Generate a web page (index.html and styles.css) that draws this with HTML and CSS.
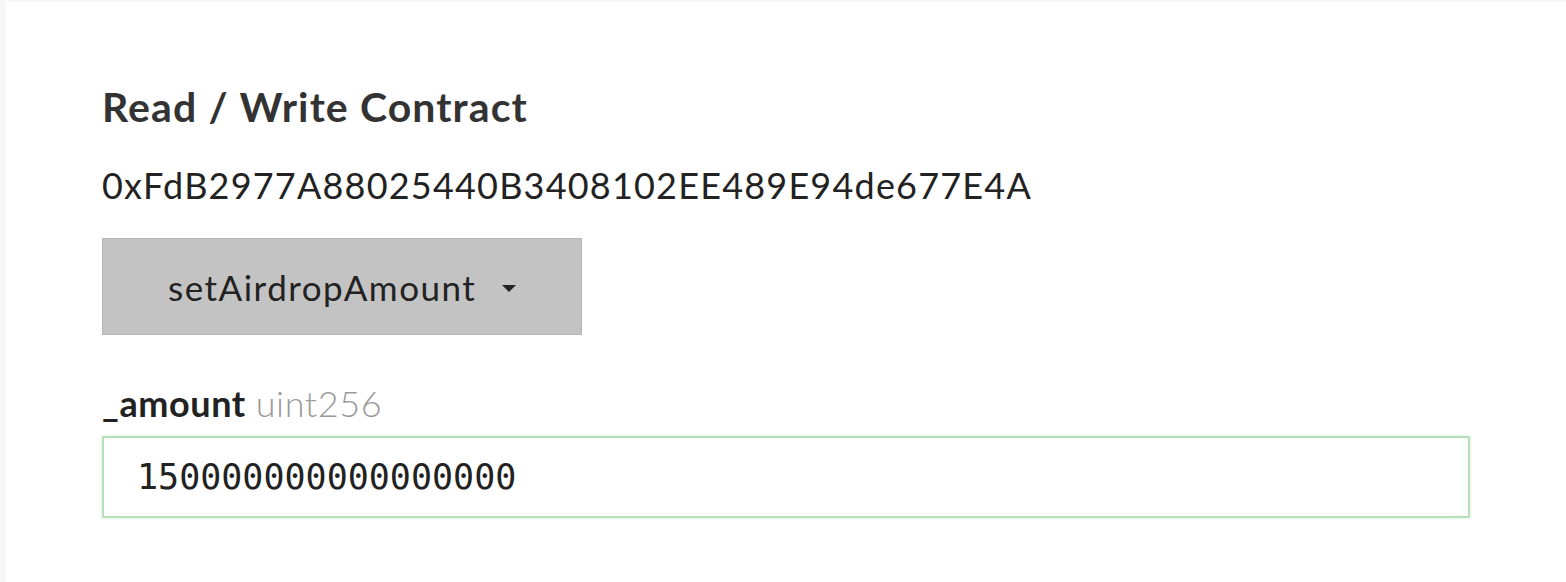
FILE: index.html
```html
<!DOCTYPE html>
<html>
<head>
<meta charset="utf-8">
<link rel="stylesheet" href="styles.css">
</head>
<body>
<div class="page">
  <main class="card">
    <h1 class="title">Read / Write Contract</h1>
    <div class="address">0xFdB2977A88025440B3408102EE489E94de677E4A</div>
    <button class="select">
      <span>setAirdropAmount</span>
      <svg class="caret" width="14" height="8" viewBox="0 0 14 8"><path d="M0 0h14L7 7z" fill="#222"/></svg>
    </button>
    <label class="label"><b>_amount</b> <span class="type">uint256</span></label>
    <div class="input">150000000000000000</div>
  </main>
</div>
</body>
</html>
```

FILE: styles.css
```css
html, body { margin: 0; padding: 0; }
body { background: #f6f6f6; font-family: Lato, "Open Sans", sans-serif; color: #333; }
.page { padding: 2px 0 0 6px; height: 580px; }
.card { background: #fff; height: 100%; padding: 81px 0 0 96px; box-sizing: border-box; display: flex; flex-direction: column; align-items: flex-start; }
.title { margin: 0; font-size: 41px; font-weight: 700; line-height: 48px; letter-spacing: 1.1px; color: #333; }
.address { margin-top: 34px; font-size: 36px; line-height: 40px; letter-spacing: 1.2px; color: #222; }
.select { margin-top: 33px; width: 480px; height: 97px; background: #c3c3c3; border: 1px solid #b5b5b5; font-family: Lato, sans-serif; font-size: 35px; letter-spacing: 1.5px; color: #222; display: flex; align-items: center; padding: 0 0 0 65px; gap: 26px; }
.caret { margin-top: 4px; }
.label { margin-top: 48px; font-size: 36px; line-height: 40px; color: #222; letter-spacing: 0.6px; }
.label b { font-weight: 700; }
.type { color: #9a9a9a; font-weight: 300; }
.input { margin-top: 13px; width: 1368px; box-sizing: border-box; height: 82px; border: 2px solid #b8e0b8; box-shadow: 0 0 3px #d4ecd4; padding: 0 0 0 33px; display: flex; align-items: center; font-family: "DejaVu Sans Mono", monospace; font-size: 35px; color: #222; }
```
